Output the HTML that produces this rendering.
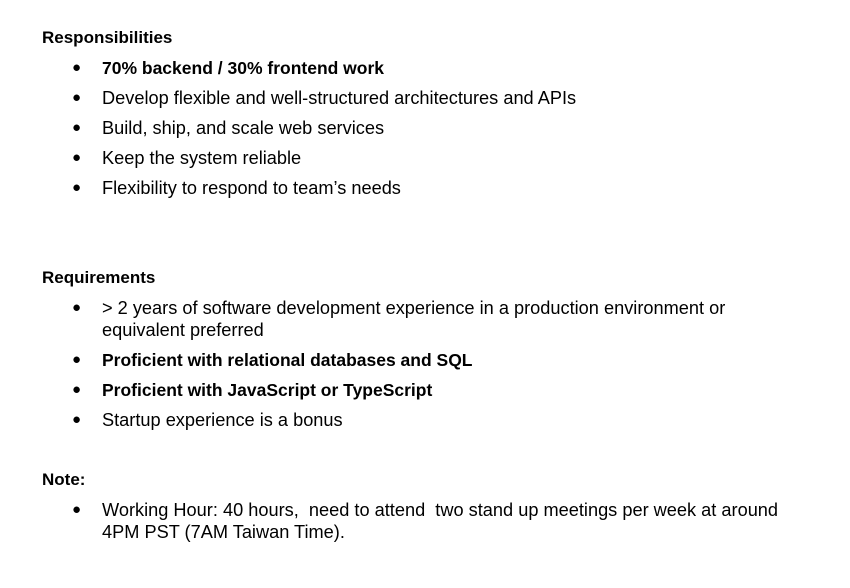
<!DOCTYPE html>
<html><head><meta charset="utf-8"><style>
body{margin:0;width:850px;height:588px;background:#fff;position:relative;font-family:"Liberation Sans",Arial,sans-serif;font-size:18.2px;color:#000;overflow:hidden}
.l{position:absolute;left:102px;line-height:22px;white-space:nowrap}
.h{position:absolute;left:42px;line-height:22px;font-weight:bold;white-space:nowrap;font-size:17px}
.b{position:absolute;left:72px;line-height:22px;font-size:15px}
b{font-weight:bold;font-size:17.5px}
</style></head><body>
<div class="h" style="top:27px">Responsibilities</div>
<div class="b" style="top:57px">●</div><div class="l" style="top:57px"><b>70% backend / 30% frontend work</b></div>
<div class="b" style="top:87px">●</div><div class="l" style="top:87px">Develop flexible and well-structured architectures and APIs</div>
<div class="b" style="top:117px">●</div><div class="l" style="top:117px">Build, ship, and scale web services</div>
<div class="b" style="top:147px">●</div><div class="l" style="top:147px">Keep the system reliable</div>
<div class="b" style="top:177px">●</div><div class="l" style="top:177px">Flexibility to respond to team’s needs</div>
<div class="h" style="top:267px">Requirements</div>
<div class="b" style="top:297px">●</div><div class="l" style="top:297px">&gt; 2 years of software development experience in a production environment or<br>equivalent preferred</div>
<div class="b" style="top:349px">●</div><div class="l" style="top:349px"><b>Proficient with relational databases and SQL</b></div>
<div class="b" style="top:379px">●</div><div class="l" style="top:379px"><b>Proficient with JavaScript or TypeScript</b></div>
<div class="b" style="top:409px">●</div><div class="l" style="top:409px">Startup experience is a bonus</div>
<div class="h" style="top:469px">Note:</div>
<div class="b" style="top:499px">●</div><div class="l" style="top:499px">Working Hour: 40 hours,&nbsp; need to attend&nbsp; two stand up meetings per week at around<br>4PM PST (7AM Taiwan Time).</div>
</body></html>
